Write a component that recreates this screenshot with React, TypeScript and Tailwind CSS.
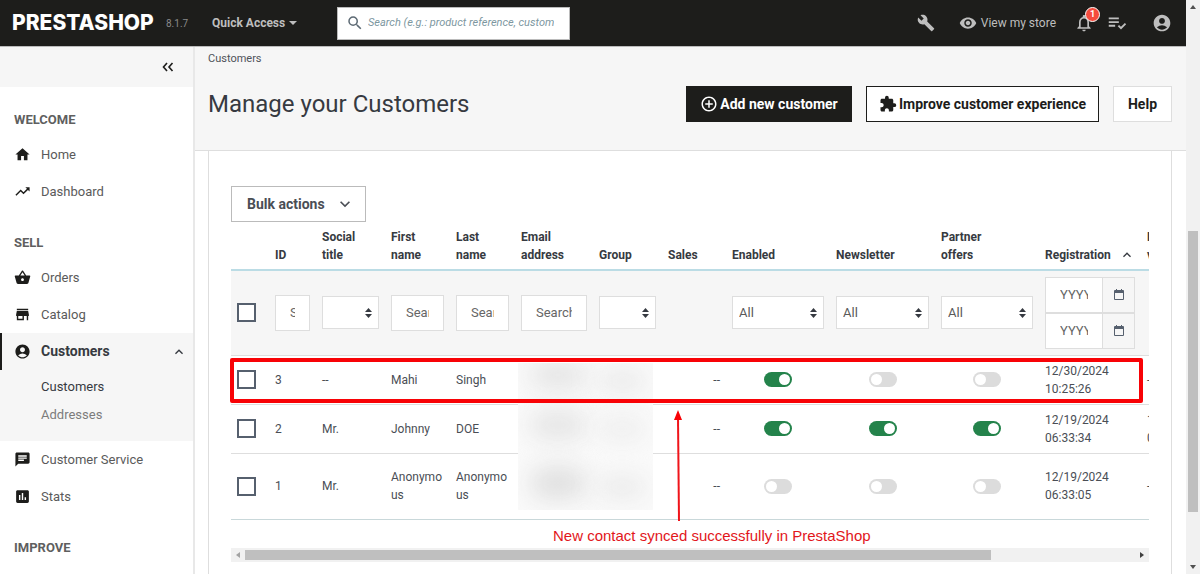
import type { ReactNode } from "react"
import { clsx } from "clsx"
import {
  MdAccountCircle,
  MdAddCircleOutline,
  MdAssessment,
  MdBuild,
  MdChat,
  MdExtension,
  MdHome,
  MdKeyboardArrowDown,
  MdKeyboardArrowUp,
  MdNotificationsNone,
  MdPlaylistAddCheck,
  MdSearch,
  MdShoppingBasket,
  MdStore,
  MdTrendingUp,
  MdVisibility,
} from "react-icons/md"

type Customer = {
  id: number
  title: string
  first: string
  last: string
  enabled: boolean
  newsletter: boolean
  partner: boolean
  date: string
  time: string
  visit: string[]
}

const CUSTOMERS: Customer[] = [
  {
    id: 3,
    title: "--",
    first: "Mahi",
    last: "Singh",
    enabled: true,
    newsletter: false,
    partner: false,
    date: "12/30/2024",
    time: "10:25:26",
    visit: ["--"],
  },
  {
    id: 2,
    title: "Mr.",
    first: "Johnny",
    last: "DOE",
    enabled: true,
    newsletter: true,
    partner: true,
    date: "12/19/2024",
    time: "06:33:34",
    visit: ["12/19/2024", "06:33:34"],
  },
  {
    id: 1,
    title: "Mr.",
    first: "Anonymous",
    last: "Anonymous",
    enabled: false,
    newsletter: false,
    partner: false,
    date: "12/19/2024",
    time: "06:33:05",
    visit: ["--"],
  },
]

const COLUMNS: { lines: string[]; width: string }[] = [
  { lines: [], width: "w-[38px]" },
  { lines: ["ID"], width: "w-[47px]" },
  { lines: ["Social", "title"], width: "w-[69px]" },
  { lines: ["First", "name"], width: "w-[65px]" },
  { lines: ["Last", "name"], width: "w-[65px]" },
  { lines: ["Email", "address"], width: "w-[78px]" },
  { lines: ["Group"], width: "w-[69px]" },
  { lines: ["Sales"], width: "w-[64px]" },
  { lines: ["Enabled"], width: "w-[104px]" },
  { lines: ["Newsletter"], width: "w-[105px]" },
  { lines: ["Partner", "offers"], width: "w-[104px]" },
  { lines: ["Registration"], width: "w-[102px]" },
  { lines: ["Last", "visit"], width: "w-[99px]" },
]

export default function App() {
  return (
    <div className="flex h-screen overflow-hidden bg-white font-['Roboto','Liberation_Sans',sans-serif] text-[#363a41]">
      <div className="flex min-w-0 flex-1 flex-col">
        <TopBar />
        <div className="flex min-h-0 flex-1">
          <Sidebar />
          <main className="flex min-w-0 flex-1 flex-col">
            <PageHeader />
            <section className="ml-[13px] mr-3.5 min-h-0 flex-1 border-x border-[#dedede] px-[22px] pt-[35px]">
              <button
                type="button"
                className="flex h-9 w-[135px] items-center justify-between border border-[#bbbbbb] pl-[15px] pr-2.5 text-[14px] font-bold text-[#4a4e55]"
              >
                Bulk actions
                <MdKeyboardArrowDown aria-hidden className="h-5 w-5" />
              </button>
              <div className="relative">
                <div className="overflow-hidden">
                  <CustomerTable />
                </div>
                <Annotations />
              </div>
              <HorizontalScrollbar />
            </section>
          </main>
        </div>
      </div>
      <VerticalScrollbar />
    </div>
  )
}

function TopBar() {
  return (
    <header className="flex h-[47px] shrink-0 items-center border-b border-[#bbbbbb] bg-[#1d1d1b] pl-3 pr-[14px] text-[#bebebe]">
      <a href="#" className="w-[154px] font-['Inter',sans-serif] text-[21px] font-extrabold leading-6 text-white">
        PRESTASHOP
      </a>
      <span className="w-[46px] text-[10px] text-[#8a8a8a]">8.1.7</span>
      <button type="button" className="flex w-[125px] items-center gap-1 text-[12px] font-bold">
        Quick Access
        <svg aria-hidden viewBox="0 0 8 4" className="h-1 w-2 fill-current">
          <path d="M0 0h8L4 4z" />
        </svg>
      </button>
      <label className="flex h-[33px] w-[233px] items-center border border-[#bbbbbb] bg-white pl-2 pr-[15px]">
        <MdSearch aria-hidden className="h-[18px] w-[18px] shrink-0 text-[#5d6a74]" />
        <input
          type="text"
          aria-label="Search"
          placeholder="Search (e.g.: product reference, customer name…)"
          className="ml-1 w-full min-w-0 text-[11px] italic outline-none placeholder:text-[#7d979f]"
        />
      </label>
      <div className="ml-auto flex items-center">
        <button type="button" aria-label="Debug mode" className="mr-6">
          <MdBuild className="h-[18px] w-[18px]" />
        </button>
        <a href="#" className="mr-[18px] flex items-center gap-1 text-[12px]">
          <MdVisibility aria-hidden className="h-[18px] w-[18px]" />
          View my store
        </a>
        <button type="button" aria-label="Notifications" className="relative mr-3">
          <MdNotificationsNone className="h-5 w-5" />
          <span className="absolute -right-1.5 -top-1.5 grid h-[15px] w-[15px] place-items-center rounded-full border border-white bg-[#f54c3e] text-[9px] font-bold text-white">
            1
          </span>
        </button>
        <button type="button" aria-label="Tasks" className="mr-6">
          <MdPlaylistAddCheck className="h-[22px] w-[22px]" />
        </button>
        <button type="button" aria-label="Account">
          <MdAccountCircle className="h-5 w-5" />
        </button>
      </div>
    </header>
  )
}

function Sidebar() {
  return (
    <nav className="w-[195px] shrink-0 overflow-hidden border-r-2 border-[#e8e8e8] bg-white">
      <div className="flex h-10 items-center justify-end bg-[#f6f6f6] pr-[18px]">
        <button type="button" aria-label="Collapse menu">
          <svg viewBox="0 0 14 10" className="h-2.5 w-3.5 fill-none stroke-[#1d1d1b]" strokeWidth="1.6">
            <path d="M6 1 2.500 5 6 9M11.500 1 8 5l3.500 4" />
          </svg>
        </button>
      </div>
      <SideHeading>WELCOME</SideHeading>
      <SideItem icon={<MdHome />}>Home</SideItem>
      <SideItem icon={<MdTrendingUp />}>Dashboard</SideItem>
      <SideHeading>SELL</SideHeading>
      <SideItem icon={<MdShoppingBasket />}>Orders</SideItem>
      <SideItem icon={<MdStore />}>Catalog</SideItem>
      <div className="bg-[#f6f6f6] pb-3">
        <SideItem icon={<MdAccountCircle />} active>
          Customers
        </SideItem>
        <div className="flex flex-col pl-[41px] pt-[3px] text-[13px] leading-7">
          <a href="#" className="text-[#363a41]">
            Customers
          </a>
          <a href="#" className="text-[#7c7c7c]">
            Addresses
          </a>
        </div>
      </div>
      <SideItem icon={<MdChat />}>Customer Service</SideItem>
      <SideItem icon={<MdAssessment />}>Stats</SideItem>
      <SideHeading>IMPROVE</SideHeading>
    </nav>
  )
}

function SideHeading({ children }: { children: ReactNode }) {
  return <h2 className="pb-2 pl-3.5 pt-[25px] text-[13px] font-bold leading-4 text-[#5f5f5f]">{children}</h2>
}

function SideItem({ icon, active, children }: { icon: ReactNode; active?: boolean; children: ReactNode }) {
  return (
    <a
      href="#"
      className={clsx(
        "flex h-[37px] items-center border-l-2 pl-3 pr-1.5",
        active
          ? "border-[#1d1d1b] text-[14px] font-bold text-[#363a41]"
          : "border-transparent text-[13px] text-[#5a5a5a]",
      )}
    >
      <span aria-hidden className="mr-2.5 text-[17px] text-[#1d1d1b]">
        {icon}
      </span>
      <span className="flex-1">{children}</span>
      {active && <MdKeyboardArrowUp aria-hidden className="h-4 w-4" />}
    </a>
  )
}

function PageHeader() {
  return (
    <div className="h-[104px] shrink-0 border-b border-[#dedede] bg-[#f6f6f6] pl-[13px] pr-3.5">
      <p className="pt-1 text-[11px] leading-4 text-[#4f5359]">Customers</p>
      <div className="mt-[19px] flex h-9 items-center">
        <h1 className="mr-auto text-[24px]">Manage your Customers</h1>
        <button
          type="button"
          className="mr-3.5 flex h-9 w-[166px] items-center justify-center gap-0.5 bg-[#1d1d1b] text-[14px] font-bold text-white"
        >
          <MdAddCircleOutline aria-hidden className="h-[18px] w-[18px]" />
          Add new customer
        </button>
        <button
          type="button"
          className="mr-3.5 flex h-9 w-[233px] items-center justify-center gap-0.5 border border-[#1d1d1b] bg-white text-[14px] font-bold text-[#1d1d1b]"
        >
          <MdExtension aria-hidden className="h-[18px] w-[18px]" />
          Improve customer experience
        </button>
        <button
          type="button"
          className="h-9 w-[59px] border border-[#dedede] bg-white text-[14px] font-bold text-[#1d1d1b]"
        >
          Help
        </button>
      </div>
    </div>
  )
}

function CustomerTable() {
  return (
    <table className="w-[1009px] table-fixed border-collapse text-left text-[12px] leading-[18px] text-[#4a4e55]">
      <thead>
        <tr className="h-12 border-b-2 border-[#bbdce5]">
          {COLUMNS.map((col, i) => (
            <th key={i} scope="col" className={clsx("px-1.5 pb-[5px] align-bottom font-bold text-[#363a41]", col.width)}>
              {col.lines[0] === "Registration" ? (
                <span className="flex items-center justify-between">
                  Registration
                  <MdKeyboardArrowUp aria-hidden className="h-4 w-4" />
                </span>
              ) : (
                col.lines.map((line) => (
                  <span key={line} className="block">
                    {line}
                  </span>
                ))
              )}
            </th>
          ))}
        </tr>
      </thead>
      <tbody>
        <tr className="h-[85px] border-b border-[#dedede] bg-[#f6f6f6]">
          <td className="px-1.5">
            <Check label="Select all" />
          </td>
          <td className="px-1.5">
            <SearchInput placeholder="Search ID" />
          </td>
          <td className="px-1.5">
            <Select label="Social title" />
          </td>
          <td className="px-1.5">
            <SearchInput placeholder="Search first name" />
          </td>
          <td className="px-1.5">
            <SearchInput placeholder="Search last name" />
          </td>
          <td className="px-1.5">
            <SearchInput placeholder="Search email" />
          </td>
          <td className="px-1.5">
            <Select label="Group" />
          </td>
          <td />
          <td className="px-1.5">
            <Select label="Enabled" value="All" />
          </td>
          <td className="px-1.5">
            <Select label="Newsletter" value="All" />
          </td>
          <td className="px-1.5">
            <Select label="Partner offers" value="All" />
          </td>
          <td className="px-1.5">
            <DateInput label="From" />
            <DateInput label="To" />
          </td>
          <td />
        </tr>
        {CUSTOMERS.map((c) => (
          <tr key={c.id} className="h-[49px] border-b border-[#dedede] last:h-[66px] last:border-[#c9d8da]">
            <td className="px-1.5">
              <Check label={`Select customer ${c.id}`} />
            </td>
            <td className="px-1.5">{c.id}</td>
            <td className="px-1.5">{c.title}</td>
            <td className="break-all px-1.5">{c.first}</td>
            <td className="break-all px-1.5">{c.last}</td>
            <td />
            <td />
            <td className="px-1.5 text-right">--</td>
            <td className="px-1.5">
              <Toggle label="Enabled" on={c.enabled} />
            </td>
            <td className="px-1.5">
              <Toggle label="Newsletter" on={c.newsletter} />
            </td>
            <td className="px-1.5">
              <Toggle label="Partner offers" on={c.partner} />
            </td>
            <td className="px-1.5">
              {c.date}
              <br />
              {c.time}
            </td>
            <td className="px-1.5">
              {c.visit.map((line) => (
                <span key={line} className="block">
                  {line}
                </span>
              ))}
            </td>
          </tr>
        ))}
      </tbody>
    </table>
  )
}

function Check({ label }: { label: string }) {
  return (
    <input
      type="checkbox"
      aria-label={label}
      className="block h-[19px] w-[19px] appearance-none border-2 border-[#56606e] bg-white checked:bg-[#56606e]"
    />
  )
}

function SearchInput({ placeholder }: { placeholder: string }) {
  return (
    <input
      type="text"
      aria-label={placeholder}
      placeholder={placeholder}
      className="block h-9 w-full border border-[#dedede] bg-white px-3.5 text-[13px] outline-none placeholder:text-[#666666]"
    />
  )
}

function Select({ label, value = "" }: { label: string; value?: string }) {
  return (
    <div className="relative">
      <select
        aria-label={label}
        defaultValue={value}
        className="block h-[33px] w-full appearance-none border border-[#dedede] bg-white pl-1.5 text-[13px] text-[#5a5a5a] outline-none"
      >
        <option value={value}>{value}</option>
      </select>
      <svg
        aria-hidden
        viewBox="0 0 7 10"
        className="pointer-events-none absolute right-[7px] top-3 h-2.5 w-[7px] fill-[#363a41]"
      >
        <path d="M0 4h7L3.500 0zM0 6h7l-3.500 4z" />
      </svg>
    </div>
  )
}

function DateInput({ label }: { label: string }) {
  return (
    <div className="flex h-9 border border-[#dedede]">
      <input
        type="text"
        aria-label={label}
        placeholder="YYYY-MM-DD"
        className="w-14 min-w-0 bg-white px-3.5 text-[13px] outline-none placeholder:text-[#666666]"
      />
      <button
        type="button"
        aria-label={`Pick date: ${label}`}
        className="grid flex-1 place-items-center border-l border-[#dedede] bg-[#f6f6f6]"
      >
        <svg viewBox="0 0 10 11" className="h-[11px] w-2.5 fill-[#56606e]">
          <path
            fillRule="evenodd"
            d="M2 0h1v1h4V0h1v1h1a1 1 0 0 1 1 1v8a1 1 0 0 1-1 1H1a1 1 0 0 1-1-1V2a1 1 0 0 1 1-1h1zM1 4v6h8V4z"
          />
        </svg>
      </button>
    </div>
  )
}

function Toggle({ label, on }: { label: string; on: boolean }) {
  return (
    <input
      type="checkbox"
      role="switch"
      aria-label={label}
      defaultChecked={on}
      className="mx-auto flex h-[15px] w-7 appearance-none items-center rounded-full bg-[#dcdcdc] px-0.5 before:h-[11px] before:w-[11px] before:rounded-full before:bg-white checked:justify-end checked:bg-[#24834b]"
    />
  )
}

/** Call-out over the newest row, plus the smudge that hides emails and groups. */
function Annotations() {
  return (
    <div className="pointer-events-none absolute inset-0">
      <div className="absolute left-[287px] top-[141px] h-[147px] w-[135px] overflow-hidden bg-[#fafafa]">
        <div className="absolute left-3 top-0 h-6 w-14 rounded-full bg-[#e2e2e2] blur-md" />
        <div className="absolute left-20 top-2 h-5 w-12 rounded-full bg-[#e8e8e8] blur-md" />
        <div className="absolute left-3 top-12 h-7 w-14 rounded-full bg-[#e4e4e4] blur-md" />
        <div className="absolute left-20 top-14 h-5 w-12 rounded-full bg-[#ececec] blur-md" />
        <div className="absolute left-3 top-[104px] h-8 w-14 rounded-full bg-[#dfdfdf] blur-md" />
        <div className="absolute left-20 top-[114px] h-5 w-12 rounded-full bg-[#e8e8e8] blur-md" />
      </div>
      <div className="absolute -left-px right-1.5 top-[136px] h-[45px] rounded-xs border-4 border-[#f80206]" />
      <svg aria-hidden viewBox="0 0 10 112" className="absolute left-[442px] top-[188px] h-28 w-2.5">
        <path d="M5 7 6 111" stroke="#f0141a" strokeWidth="2" />
        <path d="M5 0 9 10H1z" fill="#f80206" />
      </svg>
      <p className="absolute left-[322px] top-[304px] whitespace-nowrap font-['Liberation_Sans',sans-serif] text-[15px] leading-5 text-[#e2161b]">
        New contact synced successfully in PrestaShop
      </p>
    </div>
  )
}

function HorizontalScrollbar() {
  return (
    <div aria-hidden className="mt-7 flex h-3.5 items-center bg-[#f1f1f1]">
      <span className="grid w-3.5 place-items-center">
        <svg viewBox="0 0 4 6" className="h-1.5 w-1 fill-[#a3a3a3]">
          <path d="M4 0v6L0 3z" />
        </svg>
      </span>
      <span className="h-2.5 flex-[746] bg-[#bfbfbf]" />
      <span className="flex-[144]" />
      <span className="grid w-3.5 place-items-center">
        <svg viewBox="0 0 4 6" className="h-1.5 w-1 fill-[#404040]">
          <path d="M0 0v6l4-3z" />
        </svg>
      </span>
    </div>
  )
}

function VerticalScrollbar() {
  return (
    <div aria-hidden className="flex w-3.5 shrink-0 flex-col items-center bg-[#f1f1f1]">
      <span className="grid h-3.5 place-items-center">
        <svg viewBox="0 0 6 4" className="h-1 w-1.5 fill-[#505050]">
          <path d="M0 4h6L3 0z" />
        </svg>
      </span>
      <span className="flex-[217]" />
      <span className="w-2.5 flex-[281] bg-[#bfbfbf]" />
      <span className="flex-[48]" />
      <span className="grid h-3.5 place-items-center">
        <svg viewBox="0 0 6 4" className="h-1 w-1.5 fill-[#505050]">
          <path d="M0 0h6L3 4z" />
        </svg>
      </span>
    </div>
  )
}
